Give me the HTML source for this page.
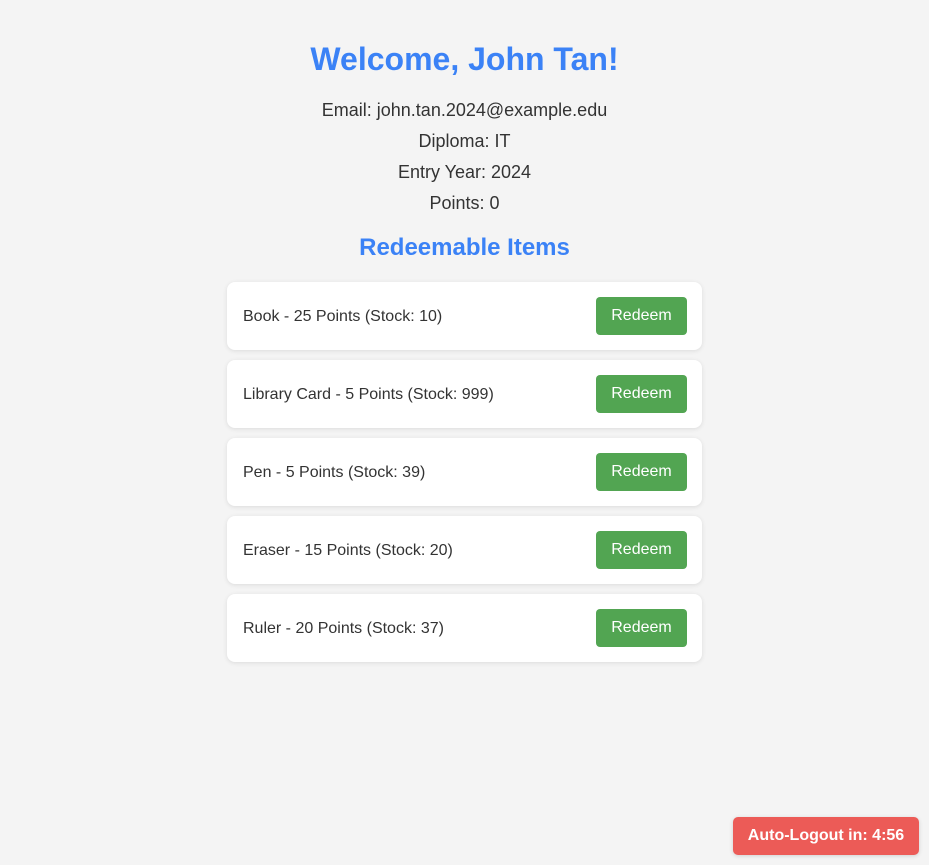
<!DOCTYPE html>
<html><head><style>
body{margin:0;background:#f4f4f4;font-family:"Liberation Sans",Arial,sans-serif;color:#333;width:929px;height:865px;overflow:hidden;position:relative}
h1{position:absolute;top:40px;left:0;width:929px;margin:0;text-align:center;font-size:32px;line-height:38px;color:#3b82f6;font-weight:bold}
.info{position:absolute;left:0;width:929px;text-align:center;font-size:18px;line-height:20px;margin:0}
h2{position:absolute;top:235px;left:0;width:929px;margin:0;text-align:center;font-size:24px;line-height:26px;color:#3b82f6}
.card{position:absolute;left:227px;width:475px;height:68px;background:#fff;border-radius:8px;box-shadow:0 1px 5px rgba(0,0,0,0.1)}
.card span{position:absolute;left:16px;top:26px;font-size:16px;line-height:18px;color:#333}
.card b{position:absolute;left:369px;top:15px;width:91px;height:38px;background:#52a552;color:#fff;border-radius:4px;font-weight:normal;font-size:16px;line-height:38px;text-align:center}
.timer{position:absolute;left:733px;top:817px;width:186px;height:38px;background:#ec5b57;color:#fff;border-radius:5px;font-weight:bold;font-size:16px;line-height:38px;text-align:center;box-shadow:0 1px 4px rgba(0,0,0,0.15)}
</style></head><body>
<h1>Welcome, John Tan!</h1>
<p class="info" style="top:100px">Email: john.tan.2024@example.edu</p>
<p class="info" style="top:131px">Diploma: IT</p>
<p class="info" style="top:162px">Entry Year: 2024</p>
<p class="info" style="top:193px">Points: 0</p>
<h2>Redeemable Items</h2>
<div class="card" style="top:282px"><span>Book - 25 Points (Stock: 10)</span><b>Redeem</b></div>
<div class="card" style="top:360px"><span>Library Card - 5 Points (Stock: 999)</span><b>Redeem</b></div>
<div class="card" style="top:438px"><span>Pen - 5 Points (Stock: 39)</span><b>Redeem</b></div>
<div class="card" style="top:516px"><span>Eraser - 15 Points (Stock: 20)</span><b>Redeem</b></div>
<div class="card" style="top:594px"><span>Ruler - 20 Points (Stock: 37)</span><b>Redeem</b></div>
<div class="timer">Auto-Logout in: 4:56</div>
</body></html>
